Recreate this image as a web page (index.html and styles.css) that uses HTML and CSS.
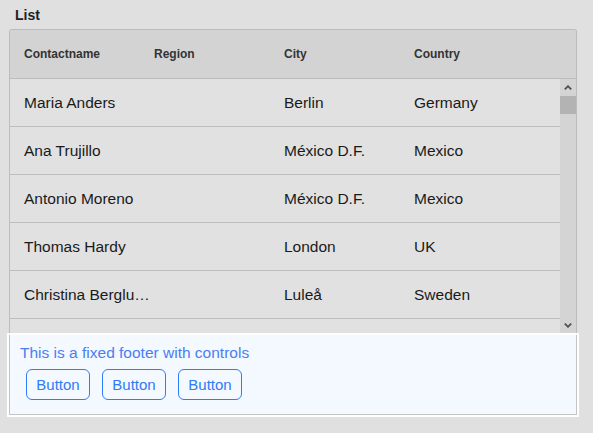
FILE: index.html
```html
<!DOCTYPE html>
<html>
<head>
<meta charset="utf-8">
<link rel="stylesheet" href="styles.css">
</head>
<body>
<div class="page">
  <div class="title">List</div>
  <div class="panel">
    <div class="head">
      <div class="hc">Contactname</div>
      <div class="hc">Region</div>
      <div class="hc">City</div>
      <div class="hc">Country</div>
    </div>
    <div class="body">
      <div class="rows">
        <div class="row"><div class="c name">Maria Anders</div><div class="c"></div><div class="c">Berlin</div><div class="c">Germany</div></div>
        <div class="row"><div class="c name">Ana Trujillo</div><div class="c"></div><div class="c">México D.F.</div><div class="c">Mexico</div></div>
        <div class="row"><div class="c name">Antonio Moreno</div><div class="c"></div><div class="c">México D.F.</div><div class="c">Mexico</div></div>
        <div class="row"><div class="c name">Thomas Hardy</div><div class="c"></div><div class="c">London</div><div class="c">UK</div></div>
        <div class="row"><div class="c name">Christina Berglund</div><div class="c"></div><div class="c">Luleå</div><div class="c">Sweden</div></div>
        <div class="row"></div>
      </div>
      <div class="sb">
        <div class="sb-btn"><svg width="8" height="5" viewBox="0 0 8 5"><polyline points="0.8,4.4 4,1.2 7.2,4.4" fill="none" stroke="#505050" stroke-width="1.8"/></svg></div>
        <div class="sb-thumb"></div>
        <div class="sb-track"></div>
        <div class="sb-btn"><svg width="8" height="5" viewBox="0 0 8 5"><polyline points="0.8,0.6 4,3.8 7.2,0.6" fill="none" stroke="#505050" stroke-width="1.8"/></svg></div>
      </div>
    </div>
  </div>
  <div class="footer">
    <div class="footer-inner">
      <div class="ftext">This is a fixed footer with controls</div>
      <div class="btns">
        <button class="btn">Button</button>
        <button class="btn">Button</button>
        <button class="btn">Button</button>
      </div>
    </div>
  </div>
</div>
</body>
</html>
```

FILE: styles.css
```css
html, body {
  margin: 0;
  padding: 0;
  background: #e0e0e0;
  font-family: "Liberation Sans", Arial, sans-serif;
}
.page {
  width: 568px;
  padding: 6px 16px 0 9px;
}
.title {
  margin-left: 6px;
  font-size: 14px;
  font-weight: bold;
  line-height: 18px;
  color: #222;
  margin-bottom: 5px;
}
.panel {
  border: 1px solid #bcbcbc;
  border-bottom: none;
  border-radius: 3px 3px 0 0;
  overflow: hidden;
}
.head {
  height: 48px;
  background: #d3d3d3;
  border-bottom: 1px solid #bcbcbc;
  display: grid;
  grid-template-columns: 130px 130px 130px 1fr;
  align-items: center;
}
.hc {
  padding-left: 14px;
  font-size: 12px;
  font-weight: bold;
  color: #333;
}
.body {
  display: flex;
  height: 254px;
}
.rows {
  flex: 1;
  overflow: hidden;
  background: #e1e1e1;
}
.row {
  height: 48px;
  box-sizing: border-box;
  border-bottom: 1px solid #bdbdbd;
  display: grid;
  grid-template-columns: 130px 130px 130px 1fr;
  align-items: center;
}
.c {
  padding-left: 14px;
  font-size: 15.5px;
  color: #1a1a1a;
  white-space: nowrap;
}
.c.name {
  margin-right: -10px;
  overflow: hidden;
  text-overflow: ellipsis;
}
.sb {
  width: 16px;
  background: #d4d4d4;
  display: flex;
  flex-direction: column;
}
.sb-btn {
  height: 17px;
  display: flex;
  align-items: center;
  justify-content: center;
}
.sb-btn:last-child {
  height: 16px;
}
.sb-thumb {
  height: 18px;
  background: #b3b3b3;
}
.sb-track {
  flex: 1;
}
.footer {
  margin: 0 -2px;
  border: 2px solid #fff;
}
.footer-inner {
  border: 1px solid #c4c4c4;
  border-top: none;
  background: #f4f8ff;
  padding: 9px 0 14px 10px;
}
.ftext {
  font-size: 15.5px;
  line-height: 18px;
  color: #4a7ef2;
}
.btns {
  display: flex;
  margin-top: 7px;
}
.btn {
  height: 31px;
  width: 64px;
  box-sizing: border-box;
  margin: 0 6px;
  padding: 0;
  border: 1px solid #2d7ff9;
  border-radius: 6px;
  background: transparent;
  color: #2f7bf5;
  font-family: "Liberation Sans", Arial, sans-serif;
  font-size: 15px;
}
```
